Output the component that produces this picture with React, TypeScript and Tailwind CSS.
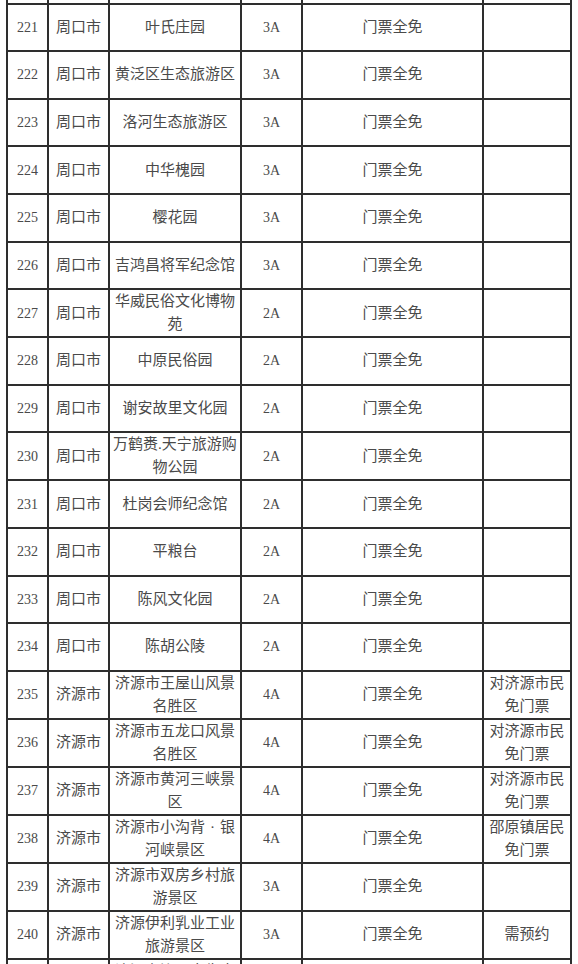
import React from 'react';

type Row = [string, string, string, string, string, string];

const rows: Row[] = [
  ['', '', '', '', '', ''],
  ['221', '周口市', '叶氏庄园', '3A', '门票全免', ''],
  ['222', '周口市', '黄泛区生态旅游区', '3A', '门票全免', ''],
  ['223', '周口市', '洛河生态旅游区', '3A', '门票全免', ''],
  ['224', '周口市', '中华槐园', '3A', '门票全免', ''],
  ['225', '周口市', '樱花园', '3A', '门票全免', ''],
  ['226', '周口市', '吉鸿昌将军纪念馆', '3A', '门票全免', ''],
  ['227', '周口市', '华威民俗文化博物苑', '2A', '门票全免', ''],
  ['228', '周口市', '中原民俗园', '2A', '门票全免', ''],
  ['229', '周口市', '谢安故里文化园', '2A', '门票全免', ''],
  ['230', '周口市', '万鹤赉.天宁旅游购物公园', '2A', '门票全免', ''],
  ['231', '周口市', '杜岗会师纪念馆', '2A', '门票全免', ''],
  ['232', '周口市', '平粮台', '2A', '门票全免', ''],
  ['233', '周口市', '陈风文化园', '2A', '门票全免', ''],
  ['234', '周口市', '陈胡公陵', '2A', '门票全免', ''],
  ['235', '济源市', '济源市王屋山风景名胜区', '4A', '门票全免', '对济源市民免门票'],
  ['236', '济源市', '济源市五龙口风景名胜区', '4A', '门票全免', '对济源市民免门票'],
  ['237', '济源市', '济源市黄河三峡景区', '4A', '门票全免', '对济源市民免门票'],
  ['238', '济源市', '济源市小沟背·银河峡景区', '4A', '门票全免', '邵原镇居民免门票'],
  ['239', '济源市', '济源市双房乡村旅游景区', '3A', '门票全免', ''],
  ['240', '济源市', '济源伊利乳业工业旅游景区', '3A', '门票全免', '需预约'],
  ['241', '济源市', '济源市沁园春生态旅游景区', '3A', '门票全免', ''],
];

const cell = 'border-2 border-[#2e2e2e] text-center align-middle leading-[23px]';
const cjk = "font-['Liberation_Serif','Noto_Sans_CJK_SC',serif]";

function Name({ text }: { text: string }) {
  const parts = text.split('·');
  return (
    <>
      {parts.map((p, i) => (
        <React.Fragment key={i}>
          {i > 0 && <span className="inline-block w-[15px] text-center">·</span>}
          {p}
        </React.Fragment>
      ))}
    </>
  );
}

export default function App() {
  return (
    <div className="w-[578px] h-[964px] overflow-hidden bg-white">
      <table className={`ml-[6px] -mt-[45px] border-collapse table-fixed w-[564px] text-[#4a4a4a] ${cjk}`}>
        <colgroup>
          <col className="w-[41px]" />
          <col className="w-[61px]" />
          <col className="w-[132px]" />
          <col className="w-[61px]" />
          <col className="w-[181px]" />
          <col className="w-[88px]" />
        </colgroup>
        <tbody>
          {rows.map(([no, city, name, level, price, note], i) => (
            <tr key={i} className="h-[47.6px]">
              <td className={`${cell} px-1 text-[14px]`}>{no}</td>
              <td className={`${cell} px-1 text-[15px]`}>{city}</td>
              <td className={`${cell} px-[1px] text-[15px]`}><Name text={name} /></td>
              <td className={`${cell} px-1 text-[14px]`}>{level}</td>
              <td className={`${cell} px-1 text-[15px]`}>{price}</td>
              <td className={`${cell} px-[2px] text-[15px]`}>{note}</td>
            </tr>
          ))}
        </tbody>
      </table>
    </div>
  );
}
